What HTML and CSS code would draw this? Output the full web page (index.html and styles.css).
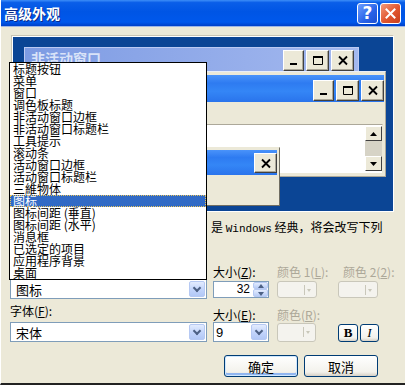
FILE: index.html
```html
<!DOCTYPE html>
<html lang="zh-CN">
<head>
  <meta charset="UTF-8">
  <meta name="viewport" content="width=device-width, initial-scale=1.0">
  <title>高级外观</title>
  <link rel="stylesheet" href="styles.css">
</head>
<body>

  <div class="dialog">
    <!-- Title bar -->
    <div class="titlebar">
      <span class="title">高级外观</span>
      <div class="title-buttons">
        <span class="tbtn help">?</span>
        <span class="tbtn close">
          <svg width="11" height="11" viewBox="0 0 11 11"><path d="M1.5 1.5l8 8M9.5 1.5l-8 8" stroke="#fff" stroke-width="2" stroke-linecap="square"/></svg>
        </span>
      </div>
    </div>

    <div class="body">
      <!-- Preview of the windows (mostly covered by the open list) -->
      <div class="preview">
        <div class="win inactive">
          <div class="caption">
            <span class="cap-text">非活动窗口</span>
            <div class="caps">
              <span class="cbtn"><svg width="10" height="10" viewBox="0 0 10 10"><rect x="1" y="7" width="7" height="2"/></svg></span>
              <span class="cbtn wide"><svg width="12" height="11" viewBox="0 0 12 11"><path d="M1.5 1.5h9v8h-9z" fill="none" stroke="#000"/><rect x="1" y="1" width="10" height="2"/></svg></span>
              <span class="cbtn wide"><svg width="12" height="11" viewBox="0 0 12 11"><path d="M2 1.5l8 8M10 1.5l-8 8" stroke="#000" stroke-width="1.8"/></svg></span>
            </div>
          </div>
        </div>

        <div class="win active">
          <div class="caption">
            <span></span>
            <div class="caps">
              <span class="cbtn"><svg width="10" height="10" viewBox="0 0 10 10"><rect x="1" y="7" width="7" height="2"/></svg></span>
              <span class="cbtn wide"><svg width="12" height="11" viewBox="0 0 12 11"><path d="M1.5 1.5h9v8h-9z" fill="none" stroke="#000"/><rect x="1" y="1" width="10" height="2"/></svg></span>
              <span class="cbtn wide"><svg width="12" height="11" viewBox="0 0 12 11"><path d="M2 1.5l8 8M10 1.5l-8 8" stroke="#000" stroke-width="1.8"/></svg></span>
            </div>
          </div>
          <div class="menubar"></div>
          <div class="client">
            <div class="scrollbar">
              <span class="sbtn"><svg width="7" height="4" viewBox="0 0 7 4"><path d="M3.5 0L7 4H0z"/></svg></span>
              <span class="track"></span>
              <span class="sbtn"><svg width="7" height="4" viewBox="0 0 7 4"><path d="M0 0h7L3.5 4z"/></svg></span>
            </div>
          </div>
        </div>

        <div class="win msgbox">
          <div class="caption">
            <span></span>
            <div class="caps">
              <span class="cbtn wide"><svg width="12" height="11" viewBox="0 0 12 11"><path d="M2 1.5l8 8M10 1.5l-8 8" stroke="#000" stroke-width="1.8"/></svg></span>
            </div>
          </div>
          <div class="msgbody"></div>
        </div>
      </div>

      <p class="note">是 <span class="latin">Windows</span> 经典，将会改写下列</p>

      <!-- Item / font settings -->
      <div class="controls">
        <span></span>
        <span class="label">大小(<u>Z</u>):</span>
        <span class="label disabled">颜色 1(<u>L</u>):</span>
        <span class="label disabled shift">颜色 2(<u>2</u>):</span>

        <div class="combo wide-combo"><span class="combo-text">图标</span><span class="ddbtn"></span></div>
        <div class="spin"><span class="spin-text">32</span><span class="spin-btns"><span class="sp up"></span><span class="sp down"></span></span></div>
        <div class="colorbtn"><span class="cb-sep"></span><span class="cb-arrow"></span></div>
        <div class="colorbtn"><span class="cb-sep"></span><span class="cb-arrow"></span></div>

        <span class="label top">字体(<u>F</u>):</span>
        <span class="label bottom">大小(<u>E</u>):</span>
        <span class="label bottom disabled">颜色(<u>R</u>):</span>
        <span></span>

        <div class="combo wide-combo"><span class="combo-text">宋体</span><span class="ddbtn"></span></div>
        <div class="combo small-combo"><span class="combo-text">9</span><span class="ddbtn"></span></div>
        <div class="colorbtn narrow"><span class="cb-sep"></span><span class="cb-arrow"></span></div>
        <div class="style-btns">
          <span class="xpbtn bold">B</span>
          <span class="xpbtn italic">I</span>
        </div>
      </div>

      <div class="actions">
        <span class="xpbtn push default">确定</span>
        <span class="xpbtn push">取消</span>
      </div>
    </div>

    <!-- Opened item list -->
    <ul class="droplist">
      <li>标题按钮</li>
      <li>菜单</li>
      <li>窗口</li>
      <li>调色板标题</li>
      <li>非活动窗口边框</li>
      <li>非活动窗口标题栏</li>
      <li>工具提示</li>
      <li>滚动条</li>
      <li>活动窗口边框</li>
      <li>活动窗口标题栏</li>
      <li>三維物体</li>
      <li class="selected">图标</li>
      <li>图标间距 (垂直)</li>
      <li>图标间距 (水平)</li>
      <li>消息框</li>
      <li>已选定的项目</li>
      <li>应用程序背景</li>
      <li>桌面</li>
    </ul>
  </div>

</body>
</html>
```

FILE: styles.css
```css
* {
  box-sizing: border-box;
}
body {
  margin: 0;
  background: #ECE9D8;
  font-family: "Noto Sans CJK SC", "Noto Sans", sans-serif;
  font-size: 12px;
  color: #000;
}
.dialog {
  position: relative;
  width: 405px;
  height: 385px;
  overflow: hidden;
  background: #ECE9D8;
  border-left: 1px solid #fff;
  border-bottom: 2px solid #222;
}

/* Title bar */
.titlebar {
  height: 27px;
  display: flex;
  align-items: center;
  justify-content: space-between;
  padding: 0 4px 0 3px;
  background: linear-gradient(180deg, #3D8EF8 0%, #0A5EE8 10%, #0055E5 45%, #0058EC 85%, #0040C8 100%);
  border-bottom: 1px solid #9EB6E6;
}
.title {
  color: #fff;
  font-weight: bold;
  font-size: 14px;
  letter-spacing: 0;
  text-shadow: 1px 1px 0 #0A2A88;
}
.title-buttons {
  display: flex;
  gap: 2px;
}
.tbtn {
  width: 21px;
  height: 21px;
  border: 1px solid #fff;
  border-radius: 3px;
  display: flex;
  align-items: center;
  justify-content: center;
  color: #fff;
}
.tbtn.help {
  background: linear-gradient(135deg, #6C9EFF, #2862E8 60%, #1E50D0);
  font-family: "DejaVu Sans", sans-serif;
  font-weight: bold;
  font-size: 17px;
  line-height: 1;
}
.tbtn.close {
  background: linear-gradient(135deg, #F39A7A, #E0552E 55%, #C83E1C);
}

.body {
  padding: 8px 0 0 9px;
}

/* Preview */
.preview {
  position: relative;
  width: 383px;
  height: 177px;
  margin-left: 1px;
  background: #0B4595;
  border: 1px solid;
  border-color: #C9C5B4 #FFFFFF #FFFFFF #C9C5B4;
  box-shadow: inset 1px 1px 0 #FFFFFF;
}
.win {
  position: absolute;
}
.caption {
  display: flex;
  justify-content: space-between;
  align-items: flex-start;
  height: 24px;
}
.cap-text {
  font-size: 14px;
  font-weight: bold;
  line-height: 18px;
  padding-left: 4px;
}
.caps {
  display: flex;
  gap: 2px;
  padding-top: 1px;
}
.cbtn {
  width: 21px;
  height: 21px;
  background: #ECE9D8;
  border: 1px solid;
  border-color: #FFFFFF #404040 #404040 #FFFFFF;
  box-shadow: inset -1px -1px 0 #ACA899;
  display: flex;
  align-items: center;
  justify-content: center;
}
.cbtn.wide {
  width: 23px;
}

.inactive {
  left: 12px;
  top: 11px;
  width: 335px;
  height: 62px;
  padding: 1px 4px 0 2px;
  background: linear-gradient(90deg, #7D9BE3, #A4B9EF);
  border: 1px solid #BCCAF2;
}
.inactive .cap-text {
  color: #D9E3F8;
}

.active {
  left: 21px;
  top: 35px;
  width: 353px;
  height: 106px;
  padding: 3px 2px 2px 3px;
  background: #ECE9D8;
  border: 1px solid;
  border-color: #E8EEFB #ACA899 #ACA899 #E8EEFB;
}
.active .caption,
.msgbox .caption {
  background: linear-gradient(180deg, #4A93FA 0%, #2E7BF1 30%, #3486F6 60%, #2A74EC 100%);
  height: 27px;
  padding: 4px 0 0 0;
  margin: 0 -1px 0 0;
}
.menubar {
  height: 22px;
}
.client {
  display: flex;
  justify-content: flex-end;
  height: 50px;
  background: #fff;
  border: 1px solid;
  border-color: #ACA899 #ECE9D8 #ECE9D8 #ACA899;
  padding: 1px 0 0 3px;
}
.scrollbar {
  display: flex;
  flex-direction: column;
  width: 17px;
}
.sbtn {
  height: 15px;
  background: #ECE9D8;
  border: 1px solid;
  border-color: #FFFFFF #404040 #404040 #FFFFFF;
  display: flex;
  align-items: center;
  justify-content: center;
}
.track {
  height: 15px;
  background: #D6D3C6;
}

.msgbox {
  left: 30px;
  top: 111px;
  width: 238px;
  height: 59px;
  padding: 2px 3px 2px 2px;
  background: #ECE9D8;
  border: 1px solid;
  border-color: #ECE9D8 #6F6D62 #6F6D62 #ECE9D8;
}
.msgbox .caption {
  height: 25px;
  padding-top: 2px;
}
.msgbox .cbtn {
  height: 20px;
}

/* Text under the preview, its start is covered by the list */
.note {
  margin: 7px 0 0 201px;
  line-height: 15px;
  height: 30px;
  white-space: nowrap;
}
.latin {
  font-family: "Liberation Mono", monospace;
  font-size: 11px;
}

/* Controls */
.controls {
  display: grid;
  grid-template-columns: 203px 64px 61px 41px;
  grid-template-rows: 15px 20px 23px 20px;
  margin-top: 15px;
}
.label {
  line-height: 15px;
  white-space: nowrap;
}
.label.disabled {
  color: #ACA899;
}
.label.shift {
  padding-left: 5px;
}
.label.top {
  align-self: start;
  padding-top: 4px;
}
.label.bottom {
  align-self: end;
}

.combo {
  display: flex;
  align-items: center;
  justify-content: space-between;
  height: 20px;
  background: #fff;
  border: 1px solid #7F9DB9;
  padding: 1px;
}
.wide-combo {
  width: 197px;
}
.small-combo {
  width: 56px;
}
.combo-text {
  padding-left: 4px;
  font-size: 13px;
}
.small-combo .combo-text {
  padding-left: 1px;
  font-family: "Liberation Sans", sans-serif;
}
.ddbtn {
  position: relative;
  width: 16px;
  height: 16px;
  border: 1px solid #B6C9F3;
  border-radius: 2px;
  background: linear-gradient(180deg, #E3ECFE, #C2D4FB 55%, #B2C8F6);
}
.ddbtn::after {
  content: "";
  position: absolute;
  left: 4px;
  top: 3px;
  width: 4px;
  height: 4px;
  border-right: 2px solid #4D6185;
  border-bottom: 2px solid #4D6185;
  transform: rotate(45deg);
}

.spin {
  display: flex;
  align-items: stretch;
  align-self: center;
  width: 56px;
  height: 17px;
  background: #fff;
  border: 1px solid #7F9DB9;
}
.spin-text {
  flex: 1;
  text-align: right;
  padding-right: 3px;
  line-height: 15px;
  font-family: "Liberation Sans", sans-serif;
}
.spin-btns {
  display: flex;
  flex-direction: column;
  width: 15px;
}
.sp {
  position: relative;
  flex: 1;
  border: 1px solid #B6C9F3;
  border-radius: 2px;
  background: linear-gradient(180deg, #E3ECFE, #B8CCF6);
}
.sp::after {
  content: "";
  position: absolute;
  left: 4px;
  border-left: 3px solid transparent;
  border-right: 3px solid transparent;
}
.sp.up::after {
  top: 1px;
  border-bottom: 4px solid #4D6185;
}
.sp.down::after {
  top: 2px;
  border-top: 4px solid #4D6185;
}

.colorbtn {
  position: relative;
  align-self: center;
  width: 40px;
  height: 17px;
  border: 1px solid #C9C7BA;
  border-radius: 3px;
  background: #F4F3EE;
}
.colorbtn.narrow {
  width: 39px;
  height: 19px;
}
.cb-sep {
  position: absolute;
  right: 11px;
  top: 3px;
  height: 10px;
  border-left: 1px solid #C9C7BA;
}
.cb-arrow {
  position: absolute;
  right: 5px;
  top: 7px;
  border-left: 2px solid transparent;
  border-right: 2px solid transparent;
  border-top: 3px solid #C9C7BA;
}

.style-btns {
  display: flex;
  gap: 2px;
  align-items: end;
}
.xpbtn {
  display: flex;
  align-items: center;
  justify-content: center;
  border: 1px solid #003C74;
  border-radius: 3px;
  background: linear-gradient(180deg, #FFFFFF, #F3F2EC 80%, #D6D0C5);
}
.style-btns .xpbtn {
  width: 20px;
  height: 18px;
  font-family: "Liberation Serif", serif;
  font-size: 13px;
}
.xpbtn.bold {
  font-weight: bold;
}
.xpbtn.italic {
  width: 19px;
  font-style: italic;
}

.actions {
  display: flex;
  justify-content: flex-end;
  gap: 6px;
  margin-top: 13px;
  padding-right: 27px;
}
.xpbtn.push {
  width: 74px;
  height: 22px;
  font-size: 13px;
}
.xpbtn.default {
  box-shadow: inset 0 0 0 1px #CEE7FF, inset 0 -2px 0 1px #91B6F0;
}

/* Dropdown list */
.droplist {
  position: absolute;
  left: 8px;
  top: 62px;
  width: 198px;
  height: 218px;
  margin: 0;
  padding: 0;
  list-style: none;
  background: #fff;
  border: 1px solid #000;
}
.droplist li {
  height: 12px;
  line-height: 12px;
  padding-left: 3px;
  white-space: nowrap;
}
.droplist li.selected {
  background: #316AC5;
  color: #fff;
  outline: 1px dotted #E8C35A;
  outline-offset: -1px;
}
```
